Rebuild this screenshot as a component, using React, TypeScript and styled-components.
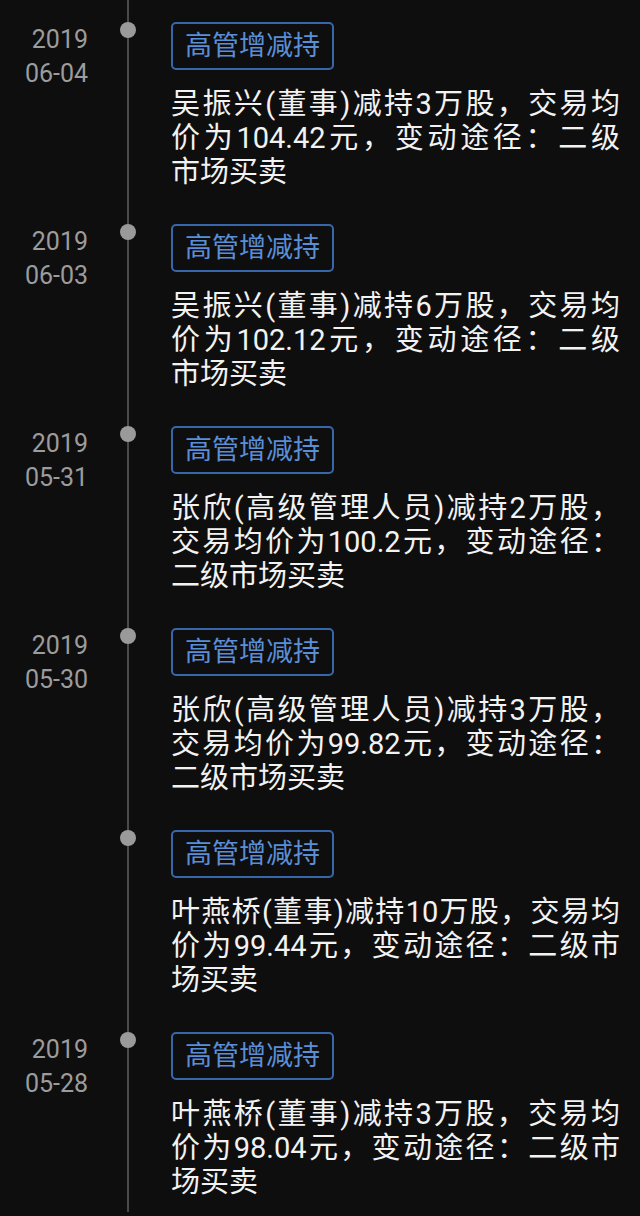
import React from "react";
import styled, { createGlobalStyle } from "styled-components";

const GlobalStyle = createGlobalStyle`
  html, body {
    margin: 0;
    padding: 0;
    background: #0e0e0e;
  }
  body {
    font-family: "Roboto", "Noto Sans CJK SC", sans-serif;
  }
`;

type Item = {
  year?: string;
  day?: string;
  tag: string;
  lines: string[];
};

// the app justifies each full line, so the text is kept split the way it wraps
const items: Item[] = [
  {
    year: "2019",
    day: "06-04",
    tag: "高管增减持",
    lines: ["吴振兴(董事)减持3万股，交易均", "价为104.42元，变动途径：二级", "市场买卖"],
  },
  {
    year: "2019",
    day: "06-03",
    tag: "高管增减持",
    lines: ["吴振兴(董事)减持6万股，交易均", "价为102.12元，变动途径：二级", "市场买卖"],
  },
  {
    year: "2019",
    day: "05-31",
    tag: "高管增减持",
    lines: ["张欣(高级管理人员)减持2万股，", "交易均价为100.2元，变动途径：", "二级市场买卖"],
  },
  {
    year: "2019",
    day: "05-30",
    tag: "高管增减持",
    lines: ["张欣(高级管理人员)减持3万股，", "交易均价为99.82元，变动途径：", "二级市场买卖"],
  },
  {
    tag: "高管增减持",
    lines: ["叶燕桥(董事)减持10万股，交易均", "价为99.44元，变动途径：二级市", "场买卖"],
  },
  {
    year: "2019",
    day: "05-28",
    tag: "高管增减持",
    lines: ["叶燕桥(董事)减持3万股，交易均", "价为98.04元，变动途径：二级市", "场买卖"],
  },
];

const Timeline = styled.div`
  display: flex;
  flex-direction: column;
`;

const Entry = styled.div`
  display: flex;
  align-items: stretch;
  height: 202px;
`;

const DateCol = styled.div`
  width: 88px;
  flex-shrink: 0;
  padding-top: 23px;
  text-align: right;
  color: #9c9c9c;
  font-size: 25px;
  line-height: 34px;
`;

const Axis = styled.div`
  width: 32px;
  margin-left: 24px;
  flex-shrink: 0;
  display: flex;
  justify-content: center;
  background: linear-gradient(
    to right,
    transparent 15px,
    #4a4a4a 15px,
    #4a4a4a 17px,
    transparent 17px
  );
`;

const Dot = styled.div`
  width: 16px;
  height: 16px;
  margin-top: 22px;
  border-radius: 50%;
  background: #9a9a9a;
`;

const Content = styled.div`
  padding-left: 27px;
  padding-top: 22px;
  width: 449px;
  display: flex;
  flex-direction: column;
  align-items: flex-start;
`;

const Tag = styled.div`
  height: 48px;
  box-sizing: border-box;
  padding: 0 12px;
  border: 2px solid #3767aa;
  border-radius: 5px;
  color: #5a8fd8;
  font-size: 27px;
  line-height: 44px;
`;

const Text = styled.div`
  margin-top: 17px;
  align-self: stretch;
  color: #f2f2f2;
  font-size: 29px;
  line-height: 34px;
`;

const Line = styled.div<{ $full: boolean }>`
  white-space: nowrap;
  text-align: ${(p) => (p.$full ? "justify" : "left")};
  text-align-last: ${(p) => (p.$full ? "justify" : "left")};
  text-justify: inter-character;
`;

const App = () => {
  return (
    <>
      <GlobalStyle />
      <Timeline lang="zh-CN">
        {items.map((item, index) => (
          <Entry key={index}>
            <DateCol>
              {item.year && <div>{item.year}</div>}
              {item.day && <div>{item.day}</div>}
            </DateCol>
            <Axis>
              <Dot />
            </Axis>
            <Content>
              <Tag>{item.tag}</Tag>
              <Text>
                {item.lines.map((line, i) => (
                  <Line key={i} $full={i < item.lines.length - 1}>
                    {line}
                  </Line>
                ))}
              </Text>
            </Content>
          </Entry>
        ))}
      </Timeline>
    </>
  );
};

export default App;
